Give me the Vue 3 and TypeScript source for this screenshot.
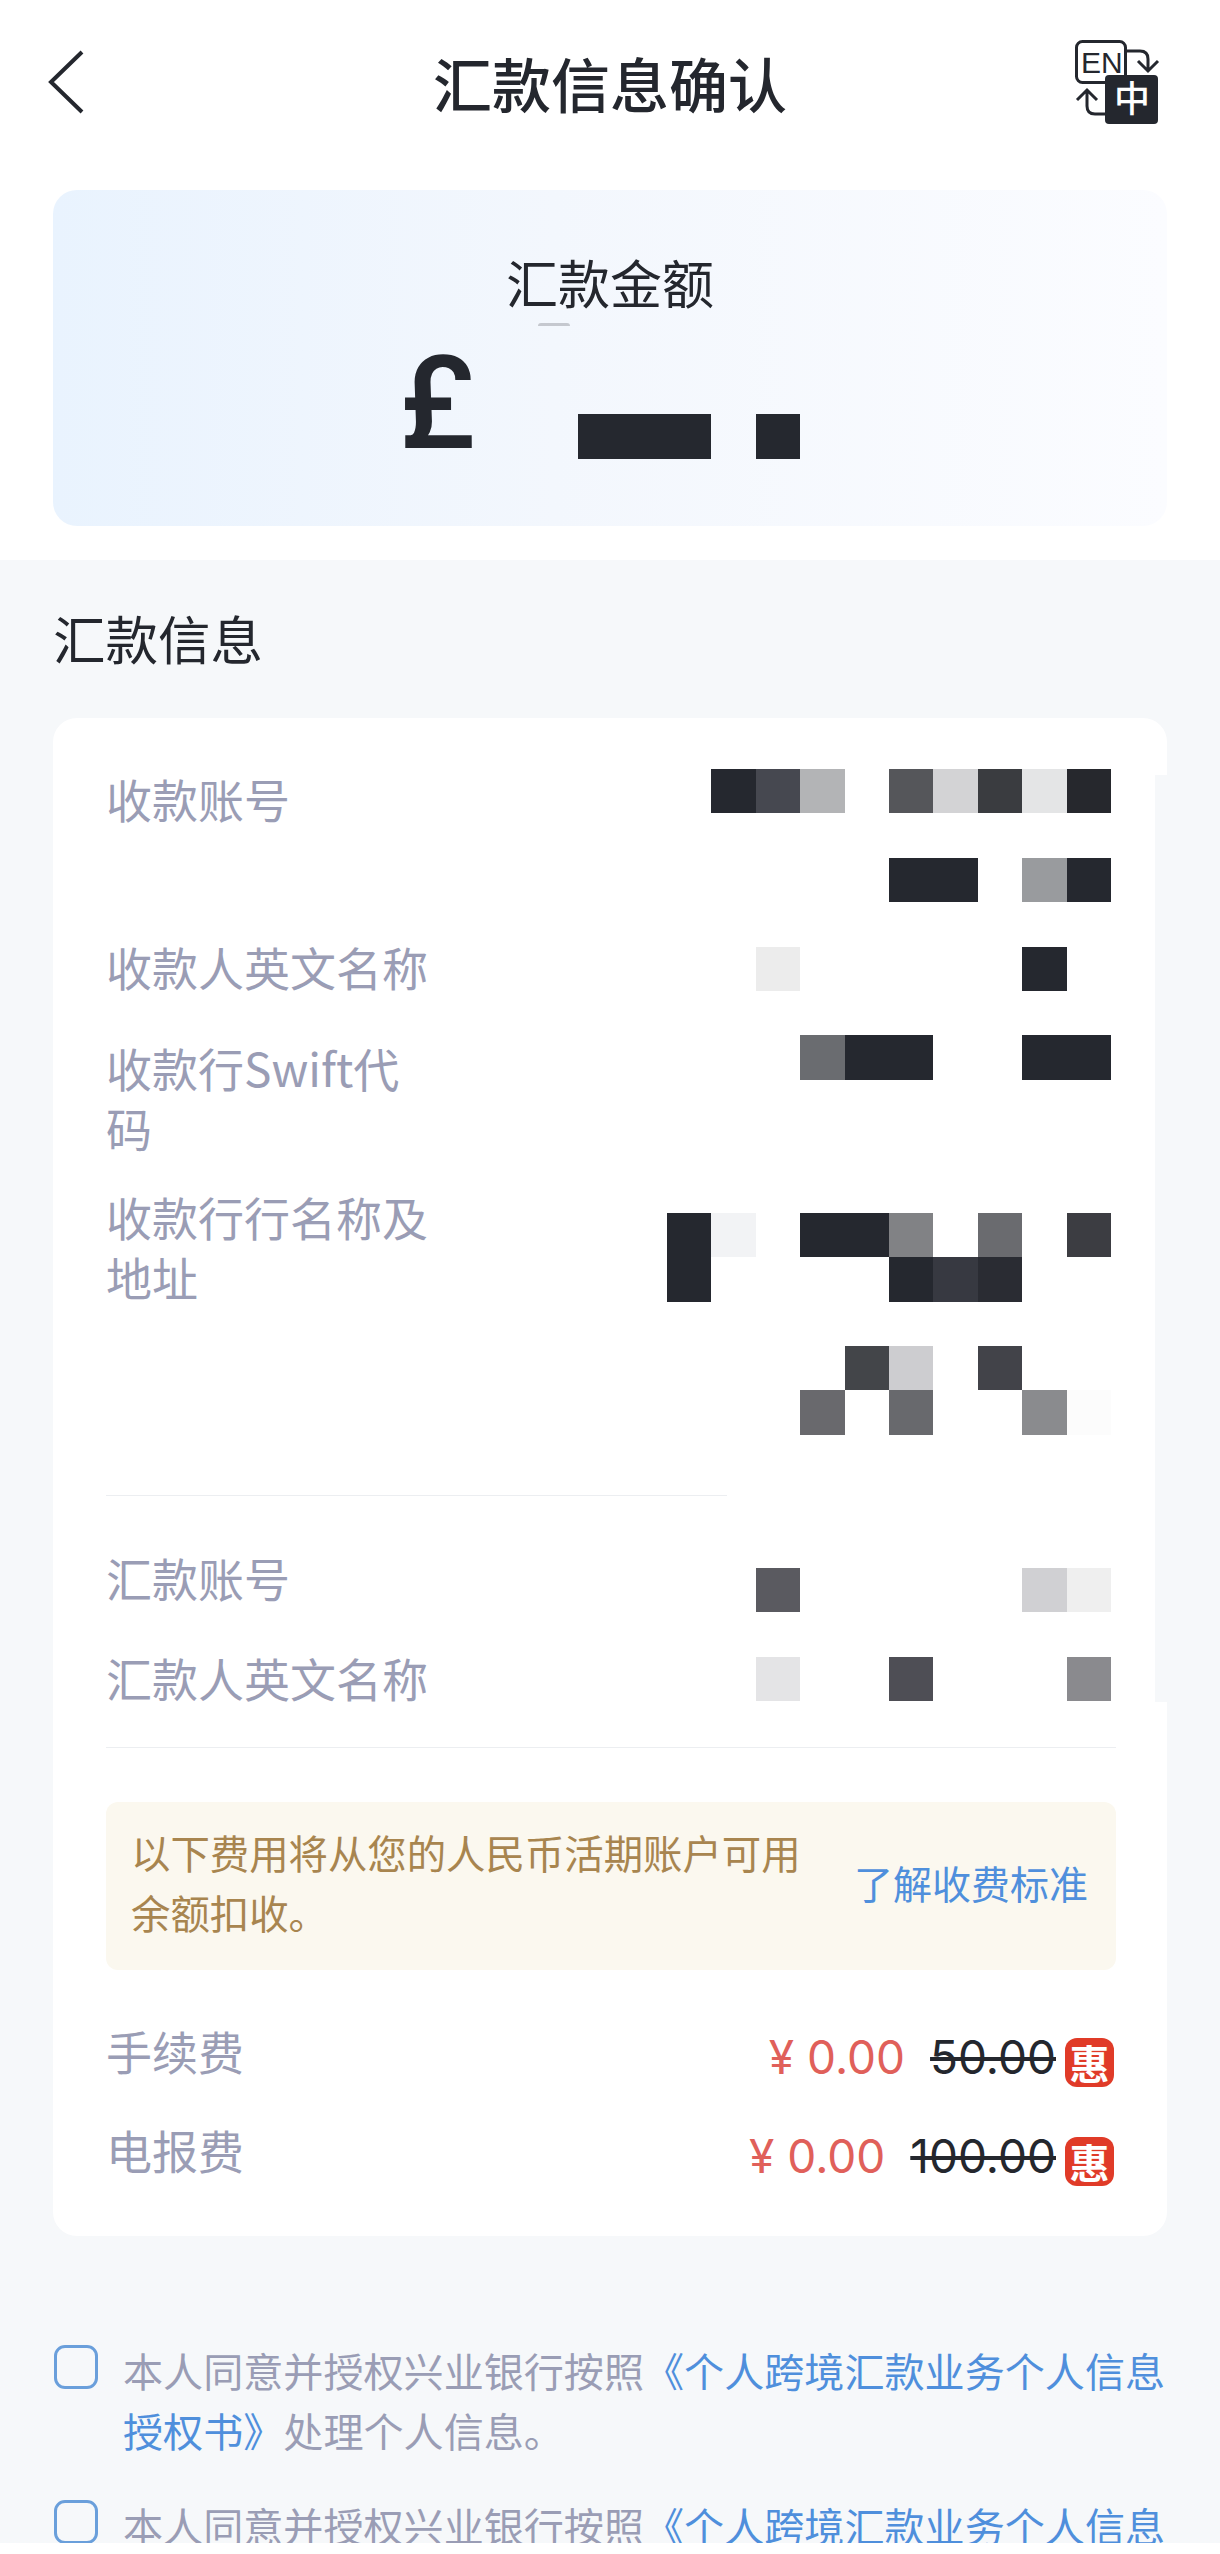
<template>
  <div class="page">
    <header class="topBar">
      <svg class="backIcon" width="40" height="70" viewBox="0 0 40 70">
        <polyline points="34,4 3,34 34,64" fill="none" stroke="#24272e" stroke-width="4" />
      </svg>
      <h1 class="title">汇款信息确认</h1>
      <svg class="langIcon" width="90" height="90" viewBox="0 0 90 90">
        <rect x="4.5" y="3.5" width="49" height="41" rx="6" fill="#fff" stroke="#24272e" stroke-width="3" />
        <text x="9" y="35" class="langEn">EN</text>
        <path d="M55 13H68Q76 13 76 21V33M66 23L76 33L86 23" fill="none" stroke="#24272e" stroke-width="3" />
        <path d="M33 76H23Q15 76 15 68V52M5 62L15 52L25 62" fill="none" stroke="#24272e" stroke-width="3" />
        <rect x="33" y="37" width="53" height="49" rx="4" fill="#24272e" />
        <text x="60" y="74" class="langZh">中</text>
      </svg>
    </header>

    <section class="hero">
      <div class="heroLabel">汇款金额</div>
      <span class="heroArc"></span>
      <div class="heroAmount">
        <span class="currency">£</span>
        <span class="amountBar wide"></span>
        <span class="amountBar"></span>
      </div>
    </section>

    <main class="content">
      <h2 class="sectionTitle">汇款信息</h2>

      <div class="card">
        <div v-for="row in payeeRows" :key="row.label" class="infoRow" :style="{ height: row.height + 'px' }">
          <span class="rowLabel">{{ row.label }}</span>
        </div>
        <div class="divider short"></div>
        <div v-for="row in payerRows" :key="row.label" class="infoRow" :style="{ height: row.height + 'px' }">
          <span class="rowLabel">{{ row.label }}</span>
        </div>
        <div class="divider"></div>

        <div class="notice">
          <p class="noticeText">以下费用将从您的人民币活期账户可用余额扣收。</p>
          <a class="noticeLink">了解收费标准</a>
        </div>

        <div v-for="fee in fees" :key="fee.label" class="feeRow">
          <span class="rowLabel">{{ fee.label }}</span>
          <div class="feeValue">
            <span class="feeNow">¥ 0.00</span>
            <span class="feeOld">{{ fee.old }}</span>
            <span class="feeBadge">惠</span>
          </div>
        </div>

        <!-- redaction blocks sitting over the account values -->
        <div class="mosaic">
          <span v-for="(c, i) in mosaicCells" :key="i" :style="{ background: c }"></span>
        </div>
        <div class="edgeMask"></div>
      </div>

      <div class="agreements">
        <label v-for="n in 2" :key="n" class="agreement">
          <span class="checkBox"></span>
          <span class="agreeText">本人同意并授权兴业银行按照<a class="agreeLink">《个人跨境汇款业务个人信息授权书》</a>处理个人信息。</span>
        </label>
      </div>
    </main>

    <div class="bottomStrip"></div>
  </div>
</template>

<script setup lang="ts">
const payeeRows = [
  { label: "收款账号", height: 168 },
  { label: "收款人英文名称", height: 101 },
  { label: "收款行Swift代码", height: 149 },
  { label: "收款行行名称及地址", height: 309 },
];

const payerRows = [
  { label: "汇款账号", height: 100 },
  { label: "汇款人英文名称", height: 100 },
];

const fees = [
  { label: "手续费", old: "50.00" },
  { label: "电报费", old: "100.00" },
];

const D = "#25282f";

// row index in the mosaic -> colour per column
const mosaicRows: Record<number, Record<number, string>> = {
  0: { 1: D, 2: "#464850", 3: "#b3b4b6", 5: "#55565a", 6: "#d3d3d5", 7: "#3a3c40", 8: "#e4e5e6", 9: "#26282d" },
  2: { 5: D, 6: D, 8: "#999b9e", 9: D },
  4: { 2: "#ececec", 8: D },
  6: { 3: "#6a6c70", 4: D, 5: D, 8: D, 9: D },
  10: { 0: D, 1: "#f2f3f5", 3: D, 4: D, 5: "#818285", 7: "#6a6b6f", 9: "#3c3d42" },
  11: { 0: D, 5: D, 6: "#373941", 7: "#2a2c33" },
  13: { 4: "#434549", 5: "#cdcdd0", 7: "#424349" },
  14: { 3: "#69696d", 5: "#68696d", 8: "#8a8b8e", 9: "#fcfcfc" },
  18: { 2: "#5a5a60", 8: "#d0d0d3", 9: "#efefef" },
  20: { 2: "#e4e4e6", 5: "#4e4e55", 9: "#8a8a8e" },
};

const mosaicCells: string[] = [];
for (let r = 0; r <= 20; r++) {
  for (let c = 0; c < 10; c++) {
    mosaicCells.push(mosaicRows[r]?.[c] ?? "transparent");
  }
}
</script>

<style scoped>
.page {
  position: relative;
  display: flex;
  flex-direction: column;
  width: 1220px;
  height: 2554px;
  overflow: hidden;
  background: #fff;
  color: #24272e;
  font-family: "Noto Sans CJK SC", "Noto Sans", sans-serif;
}

/* ---- Top bar ---- */
.topBar {
  display: grid;
  grid-template-columns: 1fr auto 1fr;
  align-items: center;
  height: 190px;
  padding: 0 58px 24px 58px;
  box-sizing: border-box;
  flex-shrink: 0;
}

.backIcon {
  justify-self: start;
  margin-left: -10px;
}

.langIcon {
  justify-self: end;
}

.langEn {
  font-family: "Liberation Sans", sans-serif;
  font-size: 30px;
  fill: #24272e;
}

.langZh {
  font-family: "Noto Sans CJK SC", sans-serif;
  font-size: 36px;
  font-weight: 500;
  fill: #fff;
  text-anchor: middle;
}

.title {
  margin: 0;
  font-size: 59px;
  font-weight: 500;
  line-height: 70px;
}

/* ---- Amount card ---- */
.hero {
  position: relative;
  flex-shrink: 0;
  height: 336px;
  margin: 0 53px 34px;
  padding-top: 62px;
  box-sizing: border-box;
  border-radius: 24px;
  background: linear-gradient(90deg, #e9f3fe 0%, #f3f7fd 45%, #fbfcff 100%);
}

.heroLabel {
  font-size: 52px;
  line-height: 60px;
  text-align: center;
}

.heroArc {
  position: absolute;
  left: 485px;
  top: 133px;
  width: 32px;
  height: 3px;
  border-radius: 16px 16px 0 0;
  background: #c5c8cf;
}

.heroAmount {
  display: flex;
  align-items: flex-end;
  height: 140px;
  margin-top: 7px;
  padding-left: 346px;
}

.currency {
  width: 179px;
  font-family: Roboto, sans-serif;
  font-size: 130px;
  font-weight: 500;
  line-height: 140px;
  margin-bottom: -15px;
}

.amountBar {
  width: 44px;
  height: 45px;
  background: #25282f;
}

.amountBar.wide {
  width: 133px;
  margin-right: 45px;
}

/* ---- Grey body ---- */
.content {
  flex: 1;
  min-height: 0;
  overflow: hidden;
  padding-top: 47px;
  background: #f6f8fa;
}

.sectionTitle {
  margin: 0 0 51px 53px;
  font-size: 52.5px;
  font-weight: 400;
  line-height: 60px;
}

.card {
  position: relative;
  margin: 0 53px;
  padding: 50px 51px 15px 53px;
  border-radius: 24px;
  background: #fff;
}

.infoRow {
  box-sizing: border-box;
}

.rowLabel {
  display: block;
  width: 325px;
  font-size: 46px;
  line-height: 60px;
  color: #9a9db5;
}

.divider {
  height: 1px;
  background: #eceef1;
}

.divider.short {
  width: 621px;
  margin-bottom: 51px;
}

.mosaic {
  position: absolute;
  left: 614px;
  top: 51px;
  display: grid;
  grid-template-columns: repeat(10, 44.4px);
  grid-auto-rows: 44.4px;
}

.edgeMask {
  position: absolute;
  right: 0;
  top: 57px;
  width: 12px;
  height: 927px;
  background: #f6f8fa;
}

/* ---- Fee notice ---- */
.notice {
  display: flex;
  align-items: center;
  justify-content: space-between;
  height: 168px;
  margin-top: 54px;
  padding: 0 28px 8px 25px;
  box-sizing: border-box;
  border-radius: 12px;
  background: #fbf8ef;
}

.noticeText {
  width: 672px;
  margin: 0;
  font-size: 39.4px;
  line-height: 60px;
  color: #a8854f;
}

.noticeLink {
  font-size: 39px;
  line-height: 60px;
  color: #4f8fdc;
}

/* ---- Fees ---- */
.feeRow {
  display: flex;
  justify-content: space-between;
  height: 99px;
}

.feeRow .rowLabel {
  margin-top: -3px;
}

.notice + .feeRow {
  margin-top: 53px;
}

.feeValue {
  display: flex;
  align-items: center;
  height: 49px;
  margin-top: 15px;
  padding-right: 2px;
  font-family: Inter, sans-serif;
  font-size: 46px;
  line-height: 49px;
}

.feeNow {
  margin-right: 25px;
  margin-top: -10px;
  color: #e0605a;
}

.feeOld {
  margin-right: 9px;
  margin-top: -10px;
  color: #24272e;
  text-decoration: line-through;
  text-decoration-thickness: 4px;
}

.feeBadge {
  width: 49px;
  height: 49px;
  border-radius: 12px;
  background: #e03b28;
  color: #fff;
  font-family: "Noto Sans CJK SC", sans-serif;
  font-size: 40px;
  font-weight: 700;
  line-height: 49px;
  text-align: center;
}

/* ---- Agreements ---- */
.agreements {
  display: flex;
  flex-direction: column;
  gap: 35px;
  margin-top: 104px;
  padding: 0 50px 0 54px;
}

.agreement {
  display: flex;
  align-items: flex-start;
  gap: 25px;
}

.checkBox {
  flex-shrink: 0;
  width: 44px;
  height: 44px;
  margin-top: 5px;
  box-sizing: border-box;
  border: 3px solid #6a9fdb;
  border-radius: 11px;
}

.agreeText {
  font-size: 40.1px;
  line-height: 60px;
  color: #9a9db5;
}

.agreeLink {
  color: #4f8fdc;
}

.bottomStrip {
  flex-shrink: 0;
  height: 11px;
  background: #fff;
}
</style>
